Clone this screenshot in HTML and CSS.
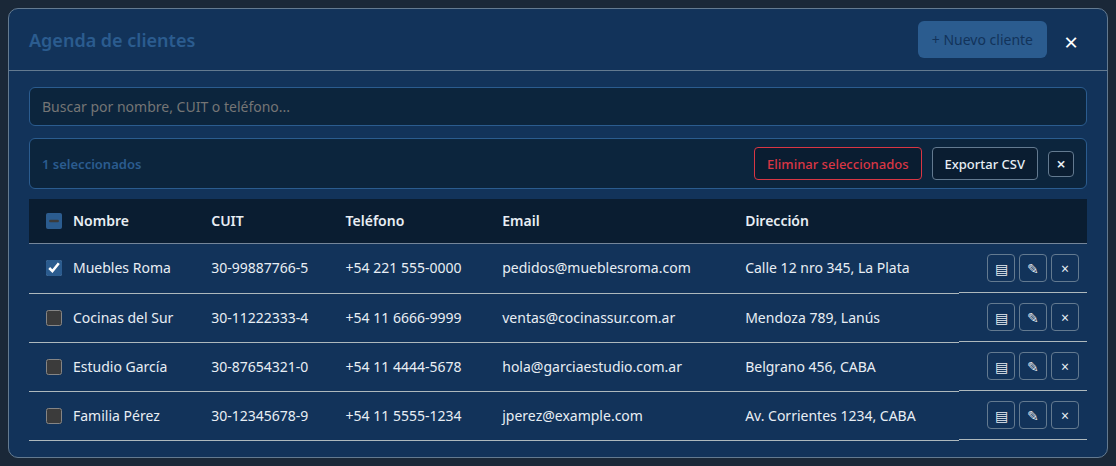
FILE: index.html
```html
<!DOCTYPE html>
<html lang="es">

<head>
    <meta charset="UTF-8">
    <meta name="viewport" content="width=device-width, initial-scale=1.0">
    <title>Agenda de clientes</title>
    <link rel="stylesheet" href="styles.css">
</head>

<body>
    <div class="modal" role="dialog" aria-labelledby="agenda-title">
        <header class="modal-header">
            <h2 id="agenda-title">Agenda de clientes</h2>
            <div class="header-actions">
                <button type="button" class="btn-primary">+ Nuevo cliente</button>
                <button type="button" class="btn-close" aria-label="Cerrar">×</button>
            </div>
        </header>
        <div class="modal-body">
            <input type="search" class="search" placeholder="Buscar por nombre, CUIT o teléfono..." aria-label="Buscar clientes">

            <!-- Acciones masivas -->
            <div class="bulk-bar">
                <span class="bulk-count">1 seleccionados</span>
                <div class="bulk-actions">
                    <button type="button" class="btn-bulk btn-danger">Eliminar seleccionados</button>
                    <button type="button" class="btn-bulk">Exportar CSV</button>
                    <button type="button" class="btn-clear" aria-label="Limpiar selección">×</button>
                </div>
            </div>

            <table class="clients">
                <thead>
                    <tr>
                        <th class="check"><input type="checkbox" id="check-all" aria-label="Seleccionar todos"></th>
                        <th>Nombre</th>
                        <th>CUIT</th>
                        <th>Teléfono</th>
                        <th>Email</th>
                        <th>Dirección</th>
                        <th></th>
                    </tr>
                </thead>
                <tbody>
                    <tr>
                        <td class="check"><input type="checkbox" aria-label="Seleccionar Muebles Roma" checked></td>
                        <td>Muebles Roma</td>
                        <td>30-99887766-5</td>
                        <td>+54 221 555-0000</td>
                        <td>pedidos@mueblesroma.com</td>
                        <td>Calle 12 nro 345, La Plata</td>
                        <td class="row-actions">
                            <button type="button" class="btn-icon" aria-label="Ver">▤</button>
                            <button type="button" class="btn-icon" aria-label="Editar">✎</button>
                            <button type="button" class="btn-icon" aria-label="Eliminar">×</button>
                        </td>
                    </tr>
                    <tr>
                        <td class="check"><input type="checkbox" aria-label="Seleccionar Cocinas del Sur"></td>
                        <td>Cocinas del Sur</td>
                        <td>30-11222333-4</td>
                        <td>+54 11 6666-9999</td>
                        <td>ventas@cocinassur.com.ar</td>
                        <td>Mendoza 789, Lanús</td>
                        <td class="row-actions">
                            <button type="button" class="btn-icon" aria-label="Ver">▤</button>
                            <button type="button" class="btn-icon" aria-label="Editar">✎</button>
                            <button type="button" class="btn-icon" aria-label="Eliminar">×</button>
                        </td>
                    </tr>
                    <tr>
                        <td class="check"><input type="checkbox" aria-label="Seleccionar Estudio García"></td>
                        <td>Estudio García</td>
                        <td>30-87654321-0</td>
                        <td>+54 11 4444-5678</td>
                        <td>hola@garciaestudio.com.ar</td>
                        <td>Belgrano 456, CABA</td>
                        <td class="row-actions">
                            <button type="button" class="btn-icon" aria-label="Ver">▤</button>
                            <button type="button" class="btn-icon" aria-label="Editar">✎</button>
                            <button type="button" class="btn-icon" aria-label="Eliminar">×</button>
                        </td>
                    </tr>
                    <tr>
                        <td class="check"><input type="checkbox" aria-label="Seleccionar Familia Pérez"></td>
                        <td>Familia Pérez</td>
                        <td>30-12345678-9</td>
                        <td>+54 11 5555-1234</td>
                        <td>jperez@example.com</td>
                        <td>Av. Corrientes 1234, CABA</td>
                        <td class="row-actions">
                            <button type="button" class="btn-icon" aria-label="Ver">▤</button>
                            <button type="button" class="btn-icon" aria-label="Editar">✎</button>
                            <button type="button" class="btn-icon" aria-label="Eliminar">×</button>
                        </td>
                    </tr>
                </tbody>
            </table>
        </div>
    </div>
    <script>
        // selección parcial
        document.querySelector('#check-all').indeterminate = true;
    </script>
</body>

</html>
```
FILE: styles.css
```css
:root {
    color-scheme: dark;
    --accent: #2b5c8f;
    --panel: #12335a;
    --field: #0c253d;
    --head: #0a1d31;
    --line: #637a90;
    --text: #e8eef4;
}

* {
    box-sizing: border-box;
}

body {
    margin: 0;
    padding: 8px;
    background: #1a2838;
    color: var(--text);
    font-family: "Noto Sans", sans-serif;
    font-size: 14px;
    line-height: 20px;
}

button,
input {
    font-family: inherit;
    font-size: 14px;
}

button {
    cursor: pointer;
}

.modal {
    background: var(--panel);
    border: 1px solid var(--line);
    border-radius: 10px;
}

.modal-header {
    display: flex;
    align-items: center;
    justify-content: space-between;
    padding: 12px 20px;
    border-bottom: 1px solid var(--line);
}

.modal-header h2 {
    margin: 0;
    color: var(--accent);
    font-size: 18px;
    font-weight: 600;
}

.header-actions {
    display: flex;
    align-items: center;
    gap: 8px;
}

.btn-primary {
    height: 37px;
    padding: 0 14px;
    border: none;
    border-radius: 6px;
    background: var(--accent);
    color: #12335a;
}

.btn-close {
    width: 32px;
    height: 37px;
    padding: 4px 0 0;
    border: none;
    background: none;
    color: #fff;
    font-size: 24px;
    line-height: 32px;
}

.modal-body {
    padding: 16px 20px;
}

.search {
    display: block;
    width: 100%;
    height: 39px;
    padding: 0 12px;
    border: 1px solid var(--accent);
    border-radius: 6px;
    background: var(--field);
    color: var(--text);
}

.search::placeholder {
    color: #757575;
}

.bulk-bar {
    display: flex;
    align-items: center;
    justify-content: space-between;
    margin: 12px 0 10px;
    padding: 8px 12px;
    border: 1px solid var(--accent);
    border-radius: 6px;
    background: var(--field);
}

.bulk-count {
    color: var(--accent);
    font-size: 13px;
    font-weight: 600;
}

.bulk-actions {
    display: flex;
    align-items: center;
    gap: 10px;
}

.btn-bulk {
    height: 33px;
    padding: 0 12px;
    border: 1px solid var(--line);
    border-radius: 4px;
    background: var(--head);
    color: var(--text);
    font-size: 13px;
    font-weight: 500;
}

.btn-danger {
    border-color: #d93644;
    color: #d93644;
}

.btn-clear {
    width: 26px;
    height: 26px;
    padding: 0;
    border: 1px solid var(--line);
    border-radius: 4px;
    background: var(--head);
    color: var(--text);
    font-size: 16px;
    font-weight: 600;
}

.clients {
    width: 100%;
    border-collapse: collapse;
}

.clients th,
.clients td {
    padding: 10px 8px;
    border-bottom: 1px solid #aeb9bd;
    text-align: left;
}

.clients th {
    padding: 12px 8px;
    border-bottom-color: #75869a;
    background: var(--head);
    font-weight: 600;
}

.clients .check {
    width: 36px;
    padding: 0 3px 0 17px;
}

.check input {
    display: block;
    width: 16px;
    height: 16px;
    margin: 0;
    accent-color: var(--accent);
}

.clients .row-actions {
    display: flex;
    justify-content: flex-end;
    gap: 4px;
}

.btn-icon {
    width: 28px;
    height: 28px;
    padding: 0;
    border: 1px solid var(--line);
    border-radius: 4px;
    background: transparent;
    color: var(--text);
}
```
